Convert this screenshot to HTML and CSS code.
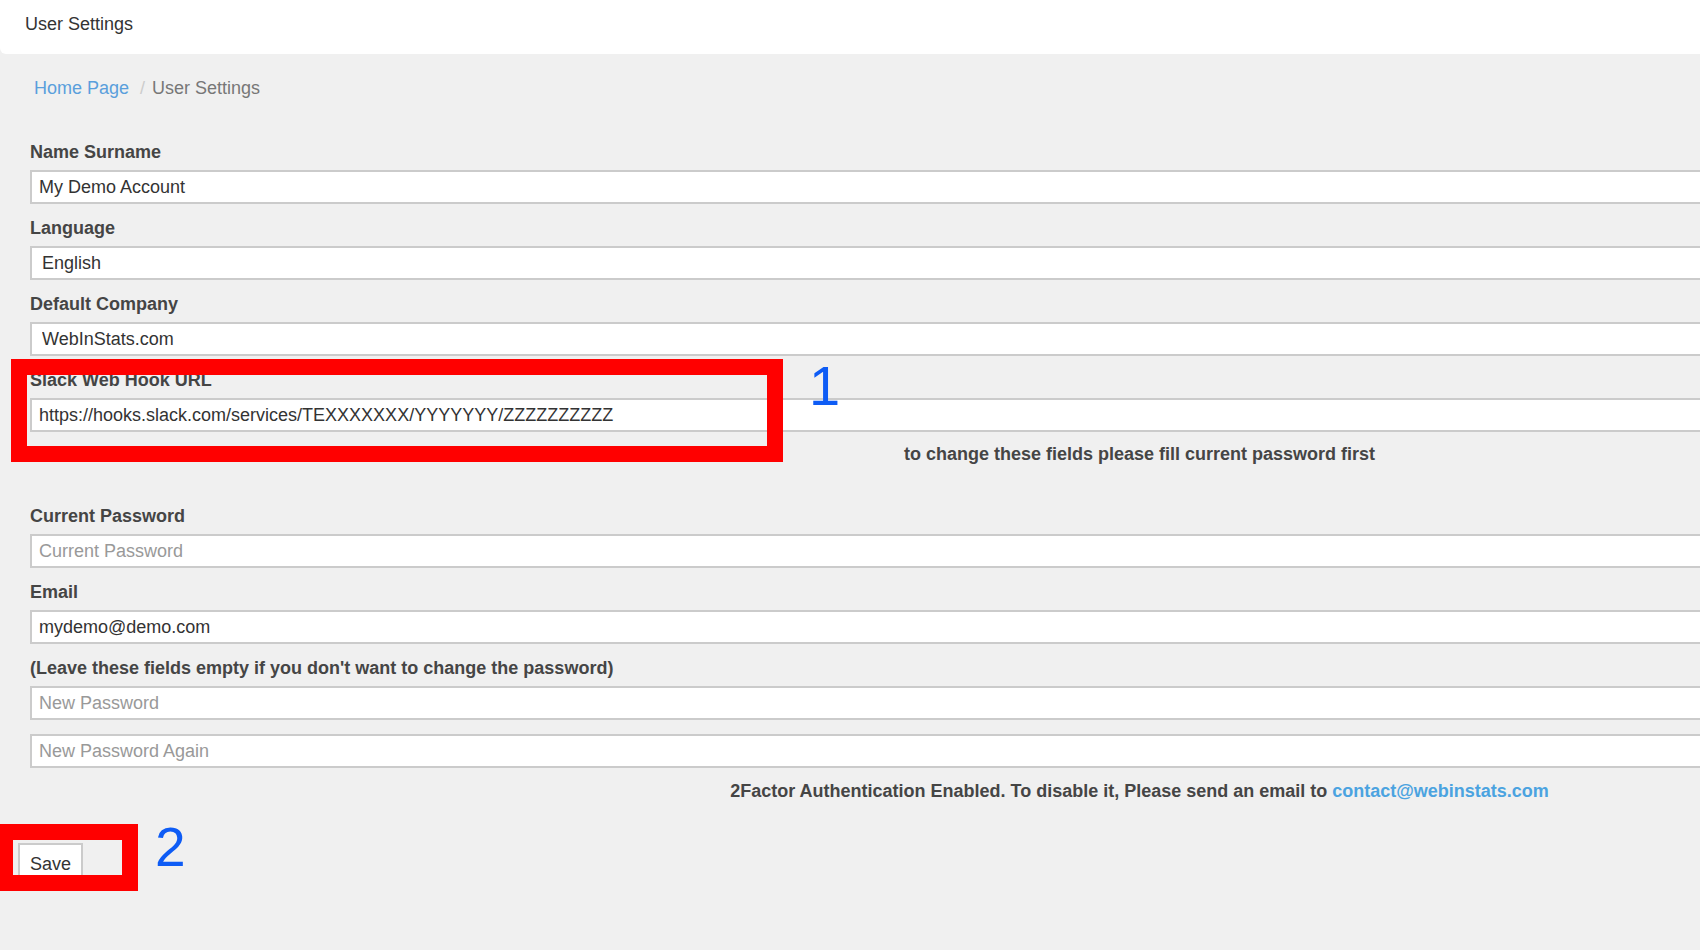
FILE: index.html
```html
<!DOCTYPE html>
<html>
    <head>
        <meta charset="UTF-8" />
        <title>User Settings</title>
        <link rel="stylesheet" href="styles.css">
    </head>
    <body>
        <div class="page">
            <header class="topbar">User Settings</header>
            <nav class="crumbs">
                <a class="crumbLink" href="#">Home Page</a><span class="sep">/</span><span class="crumbHere">User Settings</span>
            </nav>
            <form class="settings" action="javascript:void(0)">
                <div class="field">
                    <label class="label" for="name">Name Surname</label>
                    <input class="input" type="text" id="name" value="My Demo Account" />
                </div>
                <div class="field">
                    <label class="label" for="lang">Language</label>
                    <select class="input select" id="lang">
                        <option>English</option>
                    </select>
                </div>
                <div class="field">
                    <label class="label" for="company">Default Company</label>
                    <select class="input select" id="company">
                        <option>WebInStats.com</option>
                    </select>
                </div>
                <div class="field">
                    <label class="label" for="slack">Slack Web Hook URL</label>
                    <input class="input" type="text" id="slack" value="https://hooks.slack.com/services/TEXXXXXXX/YYYYYYY/ZZZZZZZZZZ" />
                </div>
                <p class="note">to change these fields please fill current password first</p>
                <div class="field">
                    <label class="label" for="curPass">Current Password</label>
                    <input class="input" type="password" id="curPass" placeholder="Current Password" />
                </div>
                <div class="field">
                    <label class="label" for="email">Email</label>
                    <input class="input" type="text" id="email" value="mydemo@demo.com" />
                </div>
                <div class="field">
                    <label class="label" for="newPass">(Leave these fields empty if you don't want to change the password)</label>
                    <input class="input" type="password" id="newPass" placeholder="New Password" />
                </div>
                <div class="field">
                    <input class="input" type="password" id="newPass2" placeholder="New Password Again" />
                </div>
                <p class="note note2fa">2Factor Authentication Enabled. To disable it, Please send an email to <a class="mailLink" href="#">contact@webinstats.com</a></p>
                <div class="actions">
                    <button class="saveBtn" type="submit">Save</button>
                </div>
            </form>

            <div class="mark markSlack"></div>
            <div class="markNum numOne">1</div>
            <div class="mark markSave"></div>
            <div class="markNum numTwo">2</div>
        </div>
    </body>
</html>
```

FILE: styles.css
```css
html, body {
    margin: 0;
    overflow: hidden;
    background-color: #f0f0f0;
}
body {
    font-family: "Liberation Sans", Arial, sans-serif;
    font-size: 18px;
    line-height: 20px;
    color: #333;
}
.page {
    position: relative;
    width: 2280px;
    min-height: 950px;
}
.topbar {
    background-color: #fff;
    padding: 14px 25px 20px;
    border-bottom-left-radius: 6px;
    color: #333;
}
.crumbs {
    display: flex;
    margin-top: 24px;
    padding-left: 34px;
}
.crumbLink {
    color: #5a9fdc;
    text-decoration: none;
}
.sep {
    color: #ccc;
    padding: 0 7px 0 11px;
}
.crumbHere {
    color: #777;
}
.settings {
    width: 2219px;
    margin: 44px 0 0 30px;
}
.field + .field {
    margin-top: 14px;
}
.label {
    display: block;
    margin-bottom: 8px;
    font-weight: bold;
    color: #454545;
}
.input {
    display: block;
    box-sizing: border-box;
    width: 100%;
    height: 34px;
    margin: 0;
    padding: 0 7px;
    border: 2px solid #cbcbcb;
    border-radius: 0;
    background-color: #fff;
    font-family: inherit;
    font-size: 18px;
    color: #333;
    outline: none;
}
.input::placeholder {
    color: #999;
}
.select {
    appearance: none;
    -webkit-appearance: none;
    padding-left: 10px;
}
.note {
    margin: 12px 0 42px;
    text-align: center;
    font-weight: bold;
    color: #454545;
}
.note2fa {
    margin: 13px 0 42px;
}
.mailLink {
    color: #4ba3e0;
    text-decoration: none;
}
.actions {
    margin-left: -12px;
}
.saveBtn {
    box-sizing: border-box;
    height: 42px;
    width: 65px;
    padding: 0 10px;
    border: 2px solid #cbcbcb;
    border-radius: 0;
    background-color: #fff;
    font-family: inherit;
    font-size: 18px;
    color: #333;
    text-align: left;
}

/* annotation marks over the screenshot */
.mark {
    position: absolute;
    box-sizing: border-box;
    border: 16px solid #ff0000;
}
.markSlack {
    left: 11px;
    top: 359px;
    width: 772px;
    height: 103px;
}
.markSave {
    left: -3px;
    top: 824px;
    width: 141px;
    height: 67px;
}
.markNum {
    position: absolute;
    line-height: 1;
    color: #0e5cf5;
}
.numOne {
    left: 809px;
    top: 358px;
    font-size: 56px;
}
.numTwo {
    left: 155px;
    top: 820px;
    font-size: 55px;
}
```
